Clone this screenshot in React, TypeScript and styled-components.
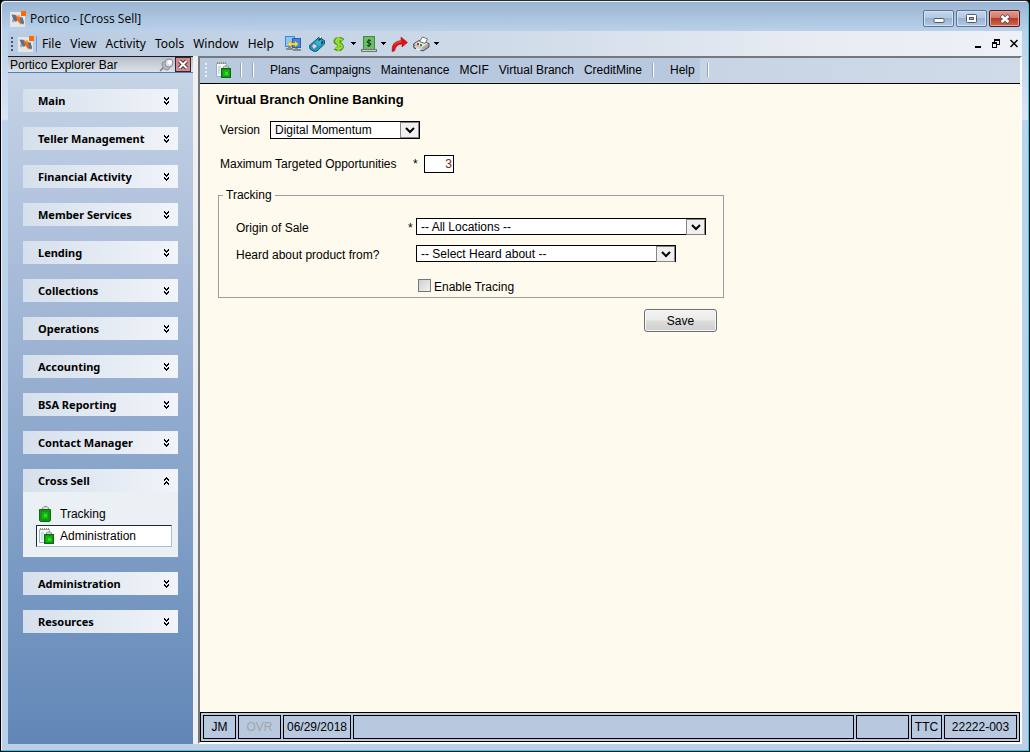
import React from 'react';
import styled, { createGlobalStyle } from 'styled-components';

const UI = `'Noto Sans', 'Open Sans', sans-serif`;
const SANS = `'Liberation Sans', Arial, sans-serif`;

const GlobalStyle = createGlobalStyle`
  *, *::before, *::after { box-sizing: border-box; }
  body { margin: 0; background: #000; color: #000; font: 12px/16px ${SANS}; }
  button, input, select { font: inherit; color: inherit; margin: 0; }
  svg { display: block; flex: none; }
`;

const Frame = styled.div`
  display: flex;
  flex-direction: column;
  min-height: 100vh;
  padding: 1px 7px 7px 6px;
  border: 1px solid #000;
  border-top-color: #2b2b33;
  border-radius: 5px 5px 0 0;
  background: linear-gradient(#99b4d1 0, #b9d1ea 30px, #d9e6f4 118px, #bbd3ec 120px, #bccfe9 100%);
  box-shadow: inset -1px -1px #22d3ee, inset 1px 1px #eaf3fc;
`;

const TitleBar = styled.header`
  display: flex;
  align-items: center;
  gap: 4px;
  height: 29px;
  padding: 4px 2px 0 3px;
  font: 12px/16px 'Open Sans', sans-serif;
`;

const AppTitle = styled.span`
  flex: 1;
`;

const CaptionButtons = styled.div`
  display: flex;
  gap: 2px;
`;

const CaptionButton = styled.button<{ $close?: boolean }>`
  display: flex;
  align-items: center;
  justify-content: center;
  width: 31px;
  height: 17px;
  padding: 0;
  border: 1px solid ${p => (p.$close ? '#4b1a22' : '#5c7391')};
  border-radius: 2px;
  box-shadow: inset 0 0 0 1px ${p => (p.$close ? '#e7a89c' : '#d3e2f2')};
  background: ${p => (p.$close
    ? 'linear-gradient(#dc9a8c 0, #d2786a 45%, #b93a22 50%, #cc6a52 100%)'
    : 'linear-gradient(#c3d6ea 0, #b3c9e2 45%, #98b3d1 50%, #b0c9e4 100%)')};
`;

const MenuBar = styled.nav`
  display: flex;
  align-items: center;
  height: 25px;
  margin: 0 0 0 1px;
  padding: 0 4px 0 3px;
  background: linear-gradient(90deg, #b9cbe2, #ccd9e7 45%, #e8ecf3 80%, #eef1f7);
  font-family: ${UI};
`;

const Grip = styled.span`
  width: 2px;
  height: 14px;
  background: repeating-linear-gradient(#42577f 0 2px, transparent 2px 4px);
`;

const LightGrip = styled(Grip)`
  background: repeating-linear-gradient(#e9eef5 0 2px, transparent 2px 4px);
`;

const LogoSlot = styled.span`
  display: flex;
  margin-left: 5px;
  padding-right: 2px;
  border-right: 1px solid #6f9ce0;
`;

const MenuItems = styled.div`
  display: flex;
  gap: 9px;
  padding-left: 5px;
`;

const FlatButton = styled.button`
  display: flex;
  align-items: center;
  padding: 0;
  border: 0;
  background: none;
  white-space: nowrap;
`;

const ToolIcons = styled.div`
  display: flex;
  flex: 1;
  align-items: center;
  gap: 5px;
  padding-left: 11px;
`;

const WideTool = styled(FlatButton)`
  padding-right: 3px;
`;

const DropTool = styled(FlatButton)`
  gap: 4px;
`;

const MdiButtons = styled.div`
  display: flex;
  align-items: center;
  gap: 9px;
`;

const Body = styled.div`
  display: flex;
  flex: 1;
  margin-left: 1px;
`;

const Sidebar = styled.aside`
  display: flex;
  flex-direction: column;
  flex: none;
  width: 185px;
  background: linear-gradient(#c6d5e6 0, #b5c5df 20%, #8ea9cd 55%, #6187b7 100%);
`;

const SidebarHeader = styled.div`
  display: flex;
  align-items: center;
  gap: 1px;
  height: 17px;
  padding: 0 2px;
  border-top: 1px solid #1c1c24;
  border-bottom: 1px solid #4f7fb8;
  background: linear-gradient(#b7bec8, #dbe2ea);
`;

const SidebarTitle = styled.span`
  flex: 1;
`;

const PanelClose = styled.button`
  display: flex;
  align-items: center;
  justify-content: center;
  width: 16px;
  height: 15px;
  padding: 0;
  border: 1px solid #3c2028;
  background: #cf8c8c;
`;

const Groups = styled.div`
  display: flex;
  flex-direction: column;
  gap: 15px;
  padding: 16px 15px;
`;

const GroupHeader = styled.button`
  display: flex;
  align-items: center;
  justify-content: space-between;
  width: 100%;
  height: 23px;
  padding: 0 9px 0 15px;
  border: 0;
  background: linear-gradient(90deg, #d6e0ec, #f1f4f9);
  font: bold 11px/16px 'Noto Sans', sans-serif;
`;

const GroupBody = styled.div`
  display: flex;
  flex-direction: column;
  padding: 10px 6px 10px 13px;
  background: #eaf0f4;
`;

const GroupLink = styled.a<{ $active?: boolean }>`
  display: flex;
  align-items: center;
  gap: 5px;
  height: ${p => (p.$active ? 22 : 23)}px;
  padding: 0 2px;
  border: 1px solid ${p => (p.$active ? '#a9bcd6' : 'transparent')};
  border-top-color: ${p => (p.$active ? '#1d2740' : 'transparent')};
  border-left-color: ${p => (p.$active ? '#1d2740' : 'transparent')};
  background: ${p => (p.$active ? '#fff' : 'none')};
  color: #000;
  text-decoration: none;
`;

const Splitter = styled.div`
  width: 5px;
  background: #f0f0f0;
`;

const Workspace = styled.section`
  display: flex;
  flex: 1;
  flex-direction: column;
  border: solid;
  border-width: 2px;
  border-color: #75797d #fff #fff #75797d;
`;

const Toolbar = styled.div`
  display: flex;
  align-items: center;
  height: 26px;
  padding: 0 0 1px 5px;
  border-bottom: 1px solid #000;
  background: linear-gradient(90deg, #b9c9de, #cfdbe8);
`;

const ToolbarIcon = styled(FlatButton)`
  margin: 0 8px 0 9px;
`;

const Divider = styled.span`
  width: 2px;
  height: 14px;
  border-left: 1px solid #9aa3b0;
  border-right: 1px solid #fff;
`;

const ToolbarMenu = styled.nav`
  display: flex;
  align-items: center;
  align-self: stretch;
  gap: 16px;
  margin: 0 7px 0 8px;
  padding: 0 5px 1px 2px;
  background: #b8c8df;
`;

const SectionItems = styled.div`
  display: flex;
  align-items: center;
  gap: 10px;
`;

const Content = styled.main`
  flex: 1;
  padding: 8px 16px;
  background: #fffaee;
`;

const Heading = styled.h1`
  margin: 0 0 13px;
  font: bold 13px/16px ${SANS};
`;

const FieldRow = styled.div`
  display: flex;
  align-items: center;
  height: 18px;
  margin-bottom: 16px;
  padding-left: 4px;
`;

const FieldLabel = styled.label<{ $width: number }>`
  width: ${p => p.$width}px;
`;

const Required = styled.span`
  width: 11px;
`;

const NumberBox = styled.input`
  width: 30px;
  height: 18px;
  padding: 0 1px;
  border: 1px solid #000;
  background: #fff;
  color: #6b2c0c;
  text-align: right;
`;

const SelectWrap = styled.span<{ $width: number }>`
  display: grid;
  width: ${p => p.$width}px;
  height: ${p => (p.$width === 150 ? 18 : 17)}px;
  border: 1px solid #000;
  background: #fff;

  & > * { grid-area: 1 / 1; }
`;

const SelectBox = styled.select`
  appearance: none;
  width: 100%;
  padding: 1px 20px 0 4px;
  border: 0;
  background: none;
  line-height: 15px;
`;

const SelectArrow = styled.span`
  display: flex;
  align-items: center;
  justify-content: center;
  justify-self: end;
  width: 19px;
  border: 1px solid #868686;
  background: #f0f0f0;
  pointer-events: none;
`;

const Tracking = styled.fieldset`
  max-width: 506px;
  min-width: 0;
  margin: -2px 0 11px 2px;
  padding: 15px 17px 2px;
  border: 1px solid #9b9ca0;
`;

const Legend = styled.legend`
  margin-left: -13px;
  padding: 0 3px;
`;

const TrackRow = styled.div`
  display: grid;
  grid-template-columns: 172px 8px auto;
  grid-template-rows: 17px;
  align-items: start;
  justify-content: start;
  line-height: 20px;
  height: 17px;
  margin-bottom: 10px;
`;

const CheckLabel = styled.label`
  display: flex;
  align-items: flex-start;
  gap: 3px;
  margin: 17px 0 0 182px;
`;

const CheckBox = styled.input`
  appearance: none;
  width: 13px;
  height: 13px;
  border: 1px solid #777;
  background: linear-gradient(135deg, #cfcfd3, #f1f1f1);
`;

const Actions = styled.div`
  display: flex;
  justify-content: flex-end;
  max-width: 508px;
  padding-right: 7px;
`;

const SaveButton = styled.button`
  width: 73px;
  height: 23px;
  padding: 0;
  border: 1px solid #707070;
  border-radius: 3px;
  background: linear-gradient(#f2f2f2, #ebebeb 48%, #dcdcdc 52%, #cfcfcf);
  box-shadow: inset 0 0 0 1px #f6f6f6;
`;

const StatusBar = styled.footer`
  display: flex;
  gap: 2px;
  height: 30px;
  padding: 2px;
  border: 1px solid #000;
  background: #b8c8df;
`;

const StatusCell = styled.span<{ $width?: number; $muted?: boolean }>`
  display: flex;
  align-items: center;
  justify-content: center;
  flex: ${p => (p.$width ? `0 0 ${p.$width}px` : '1')};
  border: 1px solid #000;
  color: ${p => (p.$muted ? '#a3a6ab' : '#000')};
`;

const Logo = () => (
  <svg width="16" height="16" viewBox="0 0 16 16">
    <rect x="0" y="1" width="15" height="15" fill="#e4e6e8" />
    <path d="M1.500 3.500L6 4l2 4.500L6 11 3.500 9z" fill="#5d7183" />
    <path d="M10 6l2.500.500L14 11l-.500 2.500L10 12 8.500 9z" fill="#5d7183" />
    <path d="M2 8l3 2-1 1.500-2-1z" fill="#9aa8b4" />
    <path d="M5 3.500l5 3.500 1 7-2.500-3L7 9z" fill="#f26a12" />
    <path d="M8 3.500l2 1.500v3L8.500 6.500z" fill="#f28c46" />
    <rect x="11" y="0" width="5" height="5" fill="#ff6a00" />
  </svg>
);

const BagIcon = () => (
  <svg width="16" height="16" viewBox="0 0 16 16">
    <path d="M3.500 4V2L5 .500h3L9.500 2v2" fill="#d9dddd" stroke="#8d9292" />
    <path d="M.500 3.500h11v11l-1 1h-9l-1-1z" fill="#12960f" stroke="#0a6a0e" />
    <rect x="3" y="6" width="6" height="7" fill="#14b414" />
    <rect x="5" y="8" width="3" height="3" fill="#30dc30" />
  </svg>
);

const AdminIcon = () => (
  <svg width="16" height="16" viewBox="0 0 16 16">
    <path d="M.500 1.500h10v13H.500z" fill="#f3f8fa" stroke="#8fb4cc" />
    <path d="M1 1h10" stroke="#a48d62" strokeWidth="2" strokeDasharray="1 1" />
    <path d="M2 5h3M2 7h2M2 9h2M2 11h2" stroke="#a9c3d0" />
    <path d="M7.500 6V5l1-1h3l1 1v1" fill="#cfd4d4" stroke="#878f8f" />
    <rect x="5.500" y="6.500" width="9" height="9" fill="#12960f" stroke="#0a6a0e" />
    <rect x="7" y="8" width="6" height="6" fill="#14b414" />
    <rect x="9" y="10" width="3" height="3" fill="#30dc30" />
  </svg>
);

const Chevrons = ({ up }: { up?: boolean }) => (
  <svg width="5" height="8" viewBox="0 0 5 8" shapeRendering="crispEdges">
    <path
      transform={up ? 'rotate(180 2.500 4)' : undefined}
      d="M0 0h1v1h1v1h1v-1h1v-1h1v2h-1v1h-1v1h-1v-1h-1v-1h-1zM0 4h1v1h1v1h1v-1h1v-1h1v2h-1v1h-1v1h-1v-1h-1v-1h-1z"
    />
  </svg>
);

const Caret = () => (
  <svg width="5" height="3" viewBox="0 0 5 3" shapeRendering="crispEdges"><path d="M0 0h5v1h-1v1h-1v1h-1v-1h-1v-1h-1z" /></svg>
);

const SelectChevron = () => (
  <svg width="10" height="7" viewBox="0 0 10 7"><path d="M1 1l4 4 4-4" fill="none" stroke="#000" strokeWidth="2" /></svg>
);

const MonitorsIcon = () => (
  <svg width="16" height="16" viewBox="0 0 16 16">
    <rect x="0.500" y="0.500" width="9" height="10" fill="#8cc6fa" stroke="#4a83d0" />
    <rect x="7.500" y="2.500" width="8" height="9" fill="#3f86ea" stroke="#2c5fb0" />
    <path d="M3 11h3v1h2v2H1v-2h2zM10 12h3v1h3v2H8v-2h2z" fill="#8d8a84" />
    <path d="M2.500 8L6 5v2h4V5l3.500 3-3.500 3V9H6v2z" fill="#ffe23c" stroke="#c89a08" strokeWidth="0.500" />
  </svg>
);

const PhoneIcon = () => (
  <svg width="16" height="16" viewBox="0 0 16 16">
    <path d="M.500 9.500L8 3l2-2h2l.5 2 3 1.500V8L8 15l-3 .500L1 13z" fill="#2097b4" stroke="#0d5a78" />
    <path d="M6 6.500L9.500 3 14 6l-4 4z" fill="#38b4cc" />
    <path d="M9 4l2-2 1 1-2 2zM12 6l2-1v2l-2 1z" fill="#0e3244" />
    <path d="M10 1l1-1h1v2h-1z" fill="#fff" />
    <path d="M3 10l2-2 3 2-3 3z" fill="#f6c9ea" />
  </svg>
);

const DollarIcon = () => (
  <svg width="14" height="16" viewBox="0 0 14 16" fill="none">
    <path d="M10 4.500Q8 2.500 5 3 1.500 4 3 6.500L8 9q2 2-1 4-3 .500-5-1M6 1v14" stroke="#4e9018" strokeWidth="4" />
    <path d="M9.500 4.500Q8 2.500 5 3 2 4 3.500 6.500L8 9q2 2-1 3.500-3 .500-5-1M5.500 1v14" stroke="#98e234" strokeWidth="2" />
  </svg>
);

const CashIcon = () => (
  <svg width="16" height="16" viewBox="0 0 16 16" fill="none">
    <rect x="2.500" y="0.500" width="11" height="13" fill="#6cbc6a" stroke="#3d8a44" />
    <path d="M10 5Q8 3.500 6.500 5T8 7t1.500 2T6 9.500M8 3v8" stroke="#0b3a12" />
    <path d="M0 13h16v3H0z" fill="#6f7872" />
    <path d="M1 14.500h14" stroke="#c8ccc8" />
  </svg>
);

const ForwardIcon = () => (
  <svg width="17" height="16" viewBox="0 0 17 16">
    <path d="M1 15.500Q.500 5 10 4.500V1l6.500 5.500L11 11V8Q5 8 3.500 15z" fill="#e01212" stroke="#a30a0a" strokeWidth="0.500" />
    <path d="M3 9Q6 5.500 10.500 5.500" fill="none" stroke="#f05a50" />
  </svg>
);

const PrinterIcon = () => (
  <svg width="17" height="16" viewBox="0 0 17 16">
    <path d="M.500 8L6 4.500l10 3v3.500l-6 4-9-3z" fill="#a9a9a5" stroke="#4c4c4c" />
    <path d="M1.500 8L6 5l9 2.500-5.500 3.500z" fill="#e6e6e2" />
    <path d="M6.500 5.500l3-4.500 5 2-2.500 4.500z" fill="#fff" stroke="#6f6f6f" />
    <path d="M2 9.500l7.500 2V14L2 11.500z" fill="#d4d4d0" />
    <path d="M3 12l5 1.500-1 1-4-1z" fill="#fff" />
    <path d="M4 8h2" stroke="#e02020" strokeWidth="2" />
    <path d="M7 9h2" stroke="#20a030" strokeWidth="2" />
  </svg>
);

const PinIcon = () => (
  <svg width="15" height="14" viewBox="0 0 15 14">
    <path d="M1 13l4-4" stroke="#777" strokeWidth="1.500" />
    <path d="M3 5l5-3 4 6-3 4q-6 0-6-7z" fill="#b4b9be" stroke="#8b9096" />
    <circle cx="10" cy="5" r="4" fill="#dfe3e6" stroke="#8b9096" />
    <circle cx="11" cy="4" r="2" fill="#fff" />
  </svg>
);

const menus = ['File', 'View', 'Activity', 'Tools', 'Window', 'Help'];
const sections = ['Plans', 'Campaigns', 'Maintenance', 'MCIF', 'Virtual Branch', 'CreditMine'];
const groups = [
  'Main', 'Teller Management', 'Financial Activity', 'Member Services', 'Lending', 'Collections',
  'Operations', 'Accounting', 'BSA Reporting', 'Contact Manager', 'Cross Sell', 'Administration', 'Resources',
];

const Dropdown = ({ id, value, width }: { id: string; value: string; width: number }) => (
  <SelectWrap $width={width}>
    <SelectBox id={id}><option>{value}</option></SelectBox>
    <SelectArrow><SelectChevron /></SelectArrow>
  </SelectWrap>
);

export default function App() {
  return (
    <>
      <GlobalStyle />
      <Frame>
        <TitleBar>
          <Logo />
          <AppTitle>Portico - [Cross Sell]</AppTitle>
          <CaptionButtons>
            <CaptionButton aria-label="Minimize">
              <svg width="12" height="9" viewBox="0 0 12 9"><rect x="1" y="4.500" width="10" height="4" rx="1" fill="#fff" stroke="#535b69" /></svg>
            </CaptionButton>
            <CaptionButton aria-label="Maximize">
              <svg width="11" height="9" viewBox="0 0 11 9" fill="none">
                <rect x="0.500" y="0.500" width="10" height="8" rx="1" fill="#fff" stroke="#535b69" />
                <rect x="3.500" y="3.500" width="4" height="2" fill="#9db6d4" stroke="#535b69" />
              </svg>
            </CaptionButton>
            <CaptionButton $close aria-label="Close">
              <svg width="12" height="10" viewBox="0 0 12 10" fill="none">
                <path d="M2 1.500l8 7M10 1.500l-8 7" stroke="#535666" strokeWidth="4" />
                <path d="M2.500 2l7 6M9.500 2l-7 6" stroke="#fff" strokeWidth="2.500" />
              </svg>
            </CaptionButton>
          </CaptionButtons>
        </TitleBar>
        <MenuBar>
          <Grip />
          <LogoSlot><Logo /></LogoSlot>
          <MenuItems>
            {menus.map(m => <FlatButton key={m}>{m}</FlatButton>)}
          </MenuItems>
          <ToolIcons>
            <WideTool aria-label="Connections"><MonitorsIcon /></WideTool>
            <WideTool aria-label="Phone"><PhoneIcon /></WideTool>
            <DropTool aria-label="Transactions"><DollarIcon /><Caret /></DropTool>
            <DropTool aria-label="Cash"><CashIcon /><Caret /></DropTool>
            <FlatButton aria-label="Forward"><ForwardIcon /></FlatButton>
            <DropTool aria-label="Print"><PrinterIcon /><Caret /></DropTool>
          </ToolIcons>
          <MdiButtons>
            <FlatButton aria-label="Minimize document">
              <svg width="8" height="9" viewBox="0 0 8 9"><path d="M0 7h6v2H0z" /></svg>
            </FlatButton>
            <FlatButton aria-label="Restore document">
              <svg width="9" height="9" viewBox="0 0 9 9" shapeRendering="crispEdges">
                <path d="M2 0h6v6H5v3H0V3h2zM3 2v1h2v2h2V2zM1 5v3h3V5z" fillRule="evenodd" />
              </svg>
            </FlatButton>
            <FlatButton aria-label="Close document">
              <svg width="8" height="9" viewBox="0 0 8 9"><path d="M.500 1l7 7M7.500 1l-7 7" stroke="#000" strokeWidth="1.500" /></svg>
            </FlatButton>
          </MdiButtons>
        </MenuBar>
        <Body>
          <Sidebar>
            <SidebarHeader>
              <SidebarTitle>Portico Explorer Bar</SidebarTitle>
              <PinIcon />
              <PanelClose aria-label="Close panel">
                <svg width="12" height="11" viewBox="0 0 12 11">
                  <path d="M2.500 2l7 7M9.500 2l-7 7" stroke="#4d3038" strokeWidth="4" />
                  <path d="M2.500 2l7 7M9.500 2l-7 7" stroke="#fff" strokeWidth="2" />
                </svg>
              </PanelClose>
            </SidebarHeader>
            <Groups>
              {groups.map(g => (
                <div key={g}>
                  <GroupHeader>{g}<Chevrons up={g === 'Cross Sell'} /></GroupHeader>
                  {g === 'Cross Sell' && (
                    <GroupBody>
                      <GroupLink href="#tracking"><BagIcon />Tracking</GroupLink>
                      <GroupLink href="#administration" $active><AdminIcon />Administration</GroupLink>
                    </GroupBody>
                  )}
                </div>
              ))}
            </Groups>
          </Sidebar>
          <Splitter />
          <Workspace>
            <Toolbar>
              <LightGrip />
              <ToolbarIcon aria-label="Administration"><AdminIcon /></ToolbarIcon>
              <Divider />
              <ToolbarMenu>
                <Divider />
                <SectionItems>
                  {sections.map(s => <FlatButton key={s}>{s}</FlatButton>)}
                  <Divider />
                </SectionItems>
                <FlatButton>Help</FlatButton>
              </ToolbarMenu>
              <Divider />
            </Toolbar>
            <Content>
              <Heading>Virtual Branch Online Banking</Heading>
              <FieldRow>
                <FieldLabel $width={50} htmlFor="version">Version</FieldLabel>
                <Dropdown id="version" value="Digital Momentum" width={150} />
              </FieldRow>
              <FieldRow>
                <FieldLabel $width={193} htmlFor="max">Maximum Targeted Opportunities</FieldLabel>
                <Required>*</Required>
                <NumberBox id="max" defaultValue="3" />
              </FieldRow>
              <Tracking>
                <Legend>Tracking</Legend>
                <TrackRow>
                  <label htmlFor="origin">Origin of Sale</label>
                  <Required>*</Required>
                  <Dropdown id="origin" value="-- All Locations --" width={290} />
                </TrackRow>
                <TrackRow>
                  <label htmlFor="heard">Heard about product from?</label>
                  <span />
                  <Dropdown id="heard" value="-- Select Heard about --" width={260} />
                </TrackRow>
                <CheckLabel><CheckBox type="checkbox" />Enable Tracing</CheckLabel>
              </Tracking>
              <Actions><SaveButton>Save</SaveButton></Actions>
            </Content>
            <StatusBar>
              <StatusCell $width={33}>JM</StatusCell>
              <StatusCell $width={43} $muted>OVR</StatusCell>
              <StatusCell $width={68}>06/29/2018</StatusCell>
              <StatusCell />
              <StatusCell $width={53} />
              <StatusCell $width={31}>TTC</StatusCell>
              <StatusCell $width={73}>22222-003</StatusCell>
            </StatusBar>
          </Workspace>
        </Body>
      </Frame>
    </>
  );
}
